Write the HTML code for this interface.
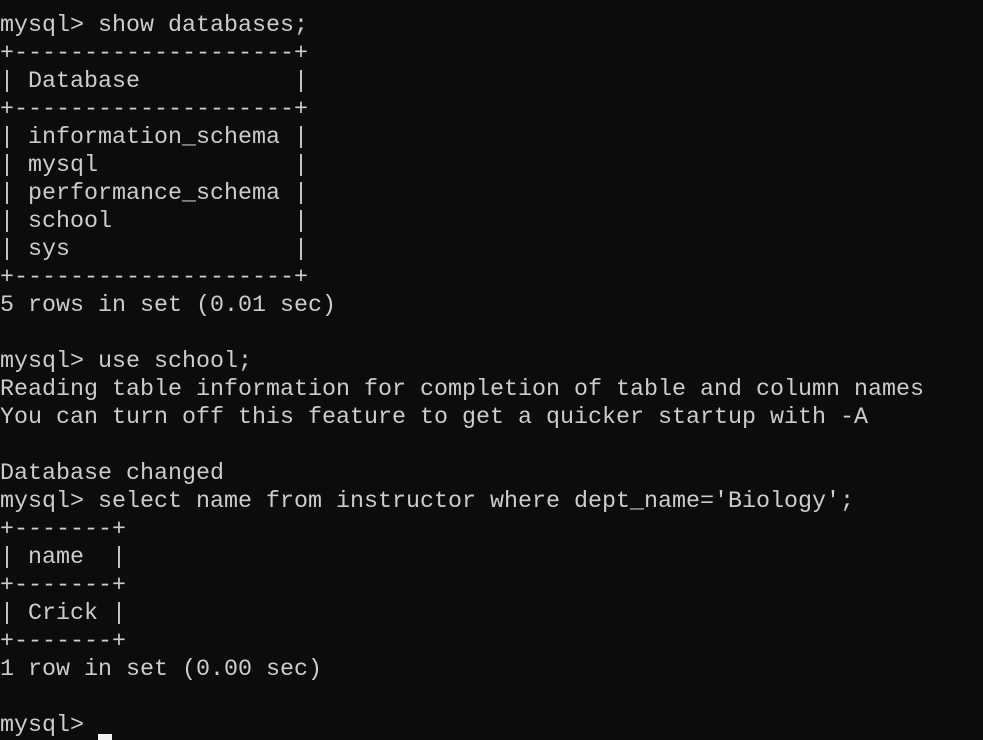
<!DOCTYPE html>
<html><head><meta charset="utf-8"><style>
html,body{margin:0;padding:0;background:#0c0c0c;width:983px;height:737px;overflow:hidden}
pre{margin:0;position:absolute;left:0;top:12px;font-family:"Liberation Mono",monospace;font-size:23.33px;line-height:28px;color:#cccccc;white-space:pre}
.c{display:inline-block;width:14px;height:6px;background:#f2f2f2;vertical-align:-9px}
</style></head><body><pre>mysql&gt; show databases;
+--------------------+
| Database           |
+--------------------+
| information_schema |
| mysql              |
| performance_schema |
| school             |
| sys                |
+--------------------+
5 rows in set (0.01 sec)

mysql&gt; use school;
Reading table information for completion of table and column names
You can turn off this feature to get a quicker startup with -A

Database changed
mysql&gt; select name from instructor where dept_name='Biology';
+-------+
| name  |
+-------+
| Crick |
+-------+
1 row in set (0.00 sec)

mysql&gt; <span class="c"></span></pre></body></html>
